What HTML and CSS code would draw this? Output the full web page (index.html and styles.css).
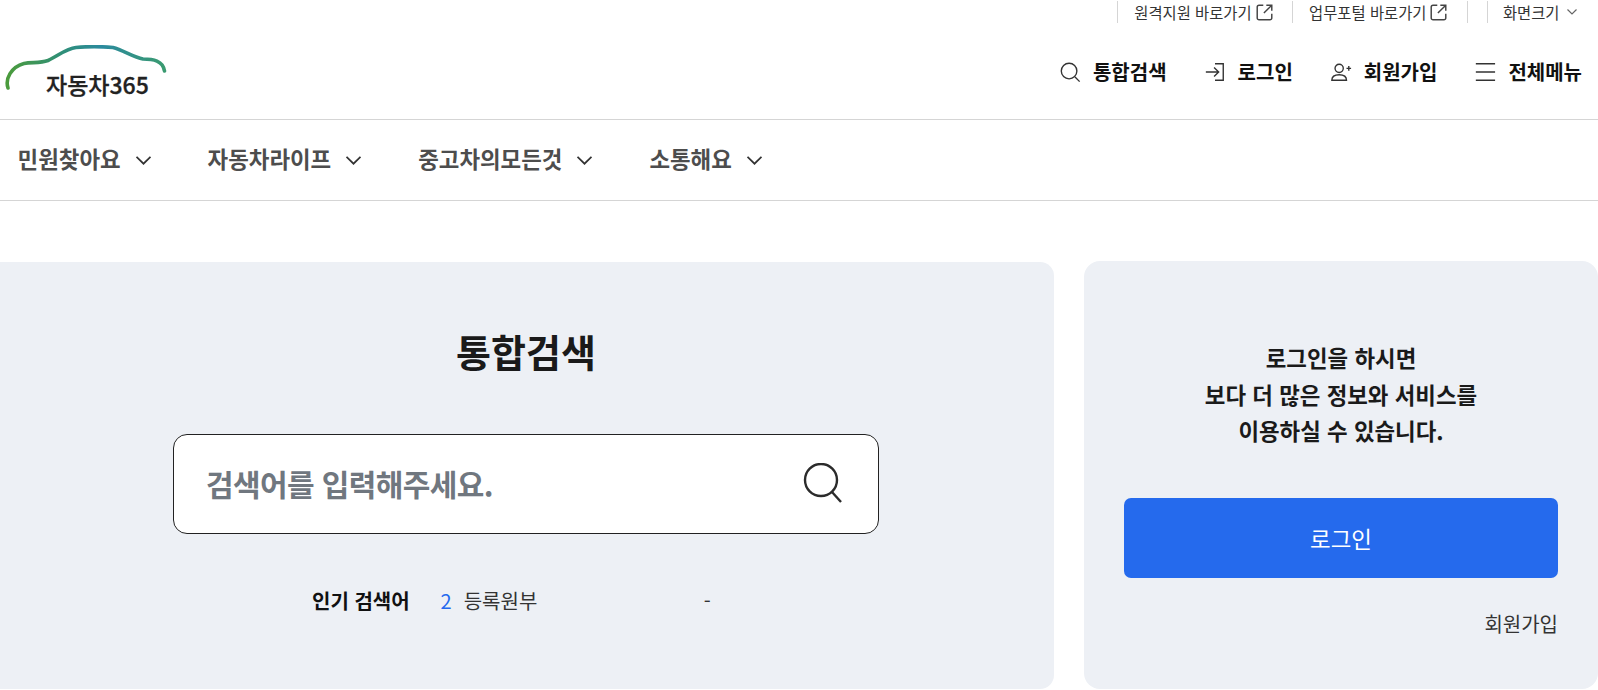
FILE: index.html
```html
<!DOCTYPE html>
<html lang="ko">
<head>
<meta charset="utf-8">
<title>자동차365</title>
<link rel="stylesheet" href="styles.css">
</head>
<body>
<header class="site-header">
  <div class="util-bar">
    <a class="util-item">원격지원 바로가기
      <svg class="ext-icon" viewBox="1 1 14 14"><path d="M7 2H3.500A1.500 1.500 0 0 0 2 3.500v9A1.500 1.500 0 0 0 3.500 14h9a1.500 1.500 0 0 0 1.500-1.500V9M9.500 2H14v4.500M14 2 7.500 8.500"/></svg>
    </a>
    <a class="util-item">업무포털 바로가기
      <svg class="ext-icon" viewBox="1 1 14 14"><path d="M7 2H3.500A1.500 1.500 0 0 0 2 3.500v9A1.500 1.500 0 0 0 3.500 14h9a1.500 1.500 0 0 0 1.500-1.500V9M9.500 2H14v4.500M14 2 7.500 8.500"/></svg>
    </a>
    <span class="util-item util-empty"></span>
    <a class="util-item util-last">화면크기
      <svg class="util-chev" viewBox="0 0 12 8"><path d="M1.500 1.500 6 6l4.500-4.500"/></svg>
    </a>
  </div>
  <div class="brand-row">
    <a class="logo">
      <svg class="logo-mark" viewBox="0 0 170 50">
        <defs>
          <linearGradient id="logoGrad" x1="0" y1="0" x2="1" y2="0">
            <stop offset="0" stop-color="#4b9b3c"/>
            <stop offset="0.35" stop-color="#2f8f78"/>
            <stop offset="0.6" stop-color="#2b8a9e"/>
            <stop offset="1" stop-color="#3a9a70"/>
          </linearGradient>
        </defs>
        <path d="M8 43C5 34 11 22 24 18.500C32 17 40 18.500 48 15.500C58 11 66 3.500 76 2.500C86 1.500 102 1.500 113 2.500C123 5 133 12 143 14C153 14 163 15.500 164.500 26" fill="none" stroke="url(#logoGrad)" stroke-width="3.600" stroke-linecap="round"/>
      </svg>
      <span class="logo-text">자동차365</span>
    </a>
    <nav class="actions">
      <a class="action">
        <svg class="action-icon" viewBox="0 0 24 24"><circle cx="11" cy="11" r="8.500"/><path d="m17.500 17.500 5 5"/></svg>통합검색
      </a>
      <a class="action">
        <svg class="action-icon" viewBox="0 0 24 24"><path d="M2 12h14M11 7l5 5-5 5M12 3h9v18h-9"/></svg>로그인
      </a>
      <a class="action">
        <svg class="action-icon" viewBox="0 0 24 24"><circle cx="10" cy="8" r="4.500"/><path d="M2 21c0-4 3-6 8-6s8 2 8 6zM18 8h5M20.500 5.500v5"/></svg>회원가입
      </a>
      <a class="action">
        <svg class="action-icon" viewBox="0 0 24 24"><path d="M2 3h21M2 12h21M2 21h21"/></svg>전체메뉴
      </a>
    </nav>
  </div>
  <nav class="gnb">
    <a class="gnb-item">민원찾아요<svg class="gnb-chev" viewBox="1 1 14 8"><path d="m1.500 1.500 6.500 6.500 6.500-6.500"/></svg></a>
    <a class="gnb-item">자동차라이프<svg class="gnb-chev" viewBox="1 1 14 8"><path d="m1.500 1.500 6.500 6.500 6.500-6.500"/></svg></a>
    <a class="gnb-item">중고차의모든것<svg class="gnb-chev" viewBox="1 1 14 8"><path d="m1.500 1.500 6.500 6.500 6.500-6.500"/></svg></a>
    <a class="gnb-item">소통해요<svg class="gnb-chev" viewBox="1 1 14 8"><path d="m1.500 1.500 6.500 6.500 6.500-6.500"/></svg></a>
  </nav>
</header>
<main class="content">
  <section class="search-card">
    <h1 class="search-title">통합검색</h1>
    <div class="search-box">
      <span class="search-placeholder">검색어를 입력해주세요.</span>
      <svg class="search-icon" viewBox="0 0 40 40"><circle cx="18" cy="17" r="16"/><path d="m29 29 9 10"/></svg>
    </div>
    <div class="popular">
      <strong class="popular-label">인기 검색어</strong>
      <span class="popular-rank">2</span>
      <span class="popular-word">등록원부</span>
      <span class="popular-trend">-</span>
    </div>
  </section>
  <aside class="login-card">
    <p class="login-msg">로그인을 하시면<br>보다 더 많은 정보와 서비스를<br>이용하실 수 있습니다.</p>
    <a class="login-btn">로그인</a>
    <a class="join-link">회원가입</a>
  </aside>
</main>
</body>
</html>
```

FILE: styles.css
```css
* { box-sizing: border-box; }
html, body { margin: 0; padding: 0; }
body {
  font-family: "Noto Sans CJK KR", "Noto Sans", sans-serif;
  color: #1a1a1a;
  background: #fff;
  overflow: hidden;
}
a { color: inherit; text-decoration: none; }

.util-bar {
  display: flex;
  justify-content: flex-end;
  height: 24px;
  align-items: center;
  padding-right: 20.500px;
  font-size: 15.360px;
  color: #333;
}
.util-item {
  display: flex;
  align-items: center;
  gap: 4px;
  height: 22px;
  border-left: 1px solid #d5d5d5;
  padding: 0 19.500px 0 16px;
  white-space: nowrap;
}
.util-empty { width: 20px; padding: 0; }
.util-last { padding: 0 0 0 15px; }
.ext-icon { width: 17px; height: 17px; fill: none; stroke: #444; stroke-width: 1.200; }
.util-chev { width: 12px; height: 8px; fill: none; stroke: #666; stroke-width: 1.200; margin-left: 2px; }

.brand-row {
  display: flex;
  justify-content: space-between;
  align-items: center;
  height: 96px;
  padding: 0 16px 0 0;
  border-bottom: 1px solid #d5d5d5;
}
.logo { display: block; width: 170px; height: 62px; position: relative; }
.logo-mark { position: absolute; left: 0; top: 4px; width: 170px; height: 50px; }
.logo-text {
  position: absolute;
  left: 46px;
  top: 25px;
  font-size: 23px;
  font-weight: 500;
  line-height: 36px;
  color: #222;
  white-space: nowrap;
  -webkit-text-stroke: 0.3px #222;
}
.actions { display: flex; gap: 37px; }
.action {
  display: flex;
  align-items: center;
  gap: 12px;
  font-size: 20px;
  font-weight: 700;
  line-height: 30px;
  color: #111;
  white-space: nowrap;
}
.action-icon { width: 22px; height: 22px; fill: none; stroke: #333; stroke-width: 1.500; }

.gnb {
  display: flex;
  align-items: center;
  gap: 57px;
  height: 81px;
  padding: 0 0 4px 17.600px;
  border-bottom: 1px solid #d5d5d5;
}
.gnb-item {
  display: flex;
  align-items: center;
  gap: 15px;
  font-size: 22.400px;
  font-weight: 700;
  color: #4d4d4d;
  white-space: nowrap;
}
.gnb-chev { width: 15px; height: 9px; fill: none; stroke: #333; stroke-width: 1.600; margin-top: 4px; }

.content {
  display: flex;
  gap: 30px;
  padding-top: 61px;
}
.search-card {
  width: 1054px;
  height: 427px;
  background: #edf0f5;
  border-radius: 0 14px 14px 0;
  display: flex;
  flex-direction: column;
  align-items: center;
  padding: 61px 2px 0 0;
}
.search-title {
  margin: 0;
  font-size: 38px;
  font-weight: 700;
  line-height: 56px;
  color: #1a1a1a;
}
.search-box {
  margin-top: 55px;
  width: 706px;
  height: 100px;
  background: #fff;
  border: 1px solid #222;
  border-radius: 14px;
  display: flex;
  align-items: center;
  justify-content: space-between;
  padding: 0 35px 2px 32px;
}
.search-placeholder { font-size: 30px; font-weight: 700; color: #70777f; letter-spacing: -0.600px; }
.search-icon { width: 40px; height: 40px; fill: none; stroke: #2b2b2b; stroke-width: 2.400; }

.popular {
  display: flex;
  align-items: center;
  margin-top: 53px;
  width: 428px;
  font-size: 20px;
  line-height: 28px;
}
.popular-label { font-weight: 700; color: #111; margin-right: 31px; }
.popular-rank { color: #2469ee; margin-right: 12px; }
.popular-word { color: #333; width: 240px; }
.popular-trend { color: #333; }

.login-card {
  width: 514px;
  height: 428px;
  margin-top: -1px;
  background: #edf0f5;
  border-radius: 16px;
  display: flex;
  flex-direction: column;
  padding: 78px 40px 0;
}
.login-msg {
  margin: 0;
  text-align: center;
  font-size: 22.400px;
  font-weight: 700;
  line-height: 36.700px;
  color: #1a1a1a;
}
.login-btn {
  display: flex;
  align-items: center;
  justify-content: center;
  height: 80px;
  margin-top: 49px;
  background: #256aed;
  border-radius: 7px;
  color: #fff;
  font-size: 22.400px;
}
.join-link {
  align-self: flex-end;
  margin-top: 31px;
  font-size: 20px;
  line-height: 30px;
  color: #333;
}
```
